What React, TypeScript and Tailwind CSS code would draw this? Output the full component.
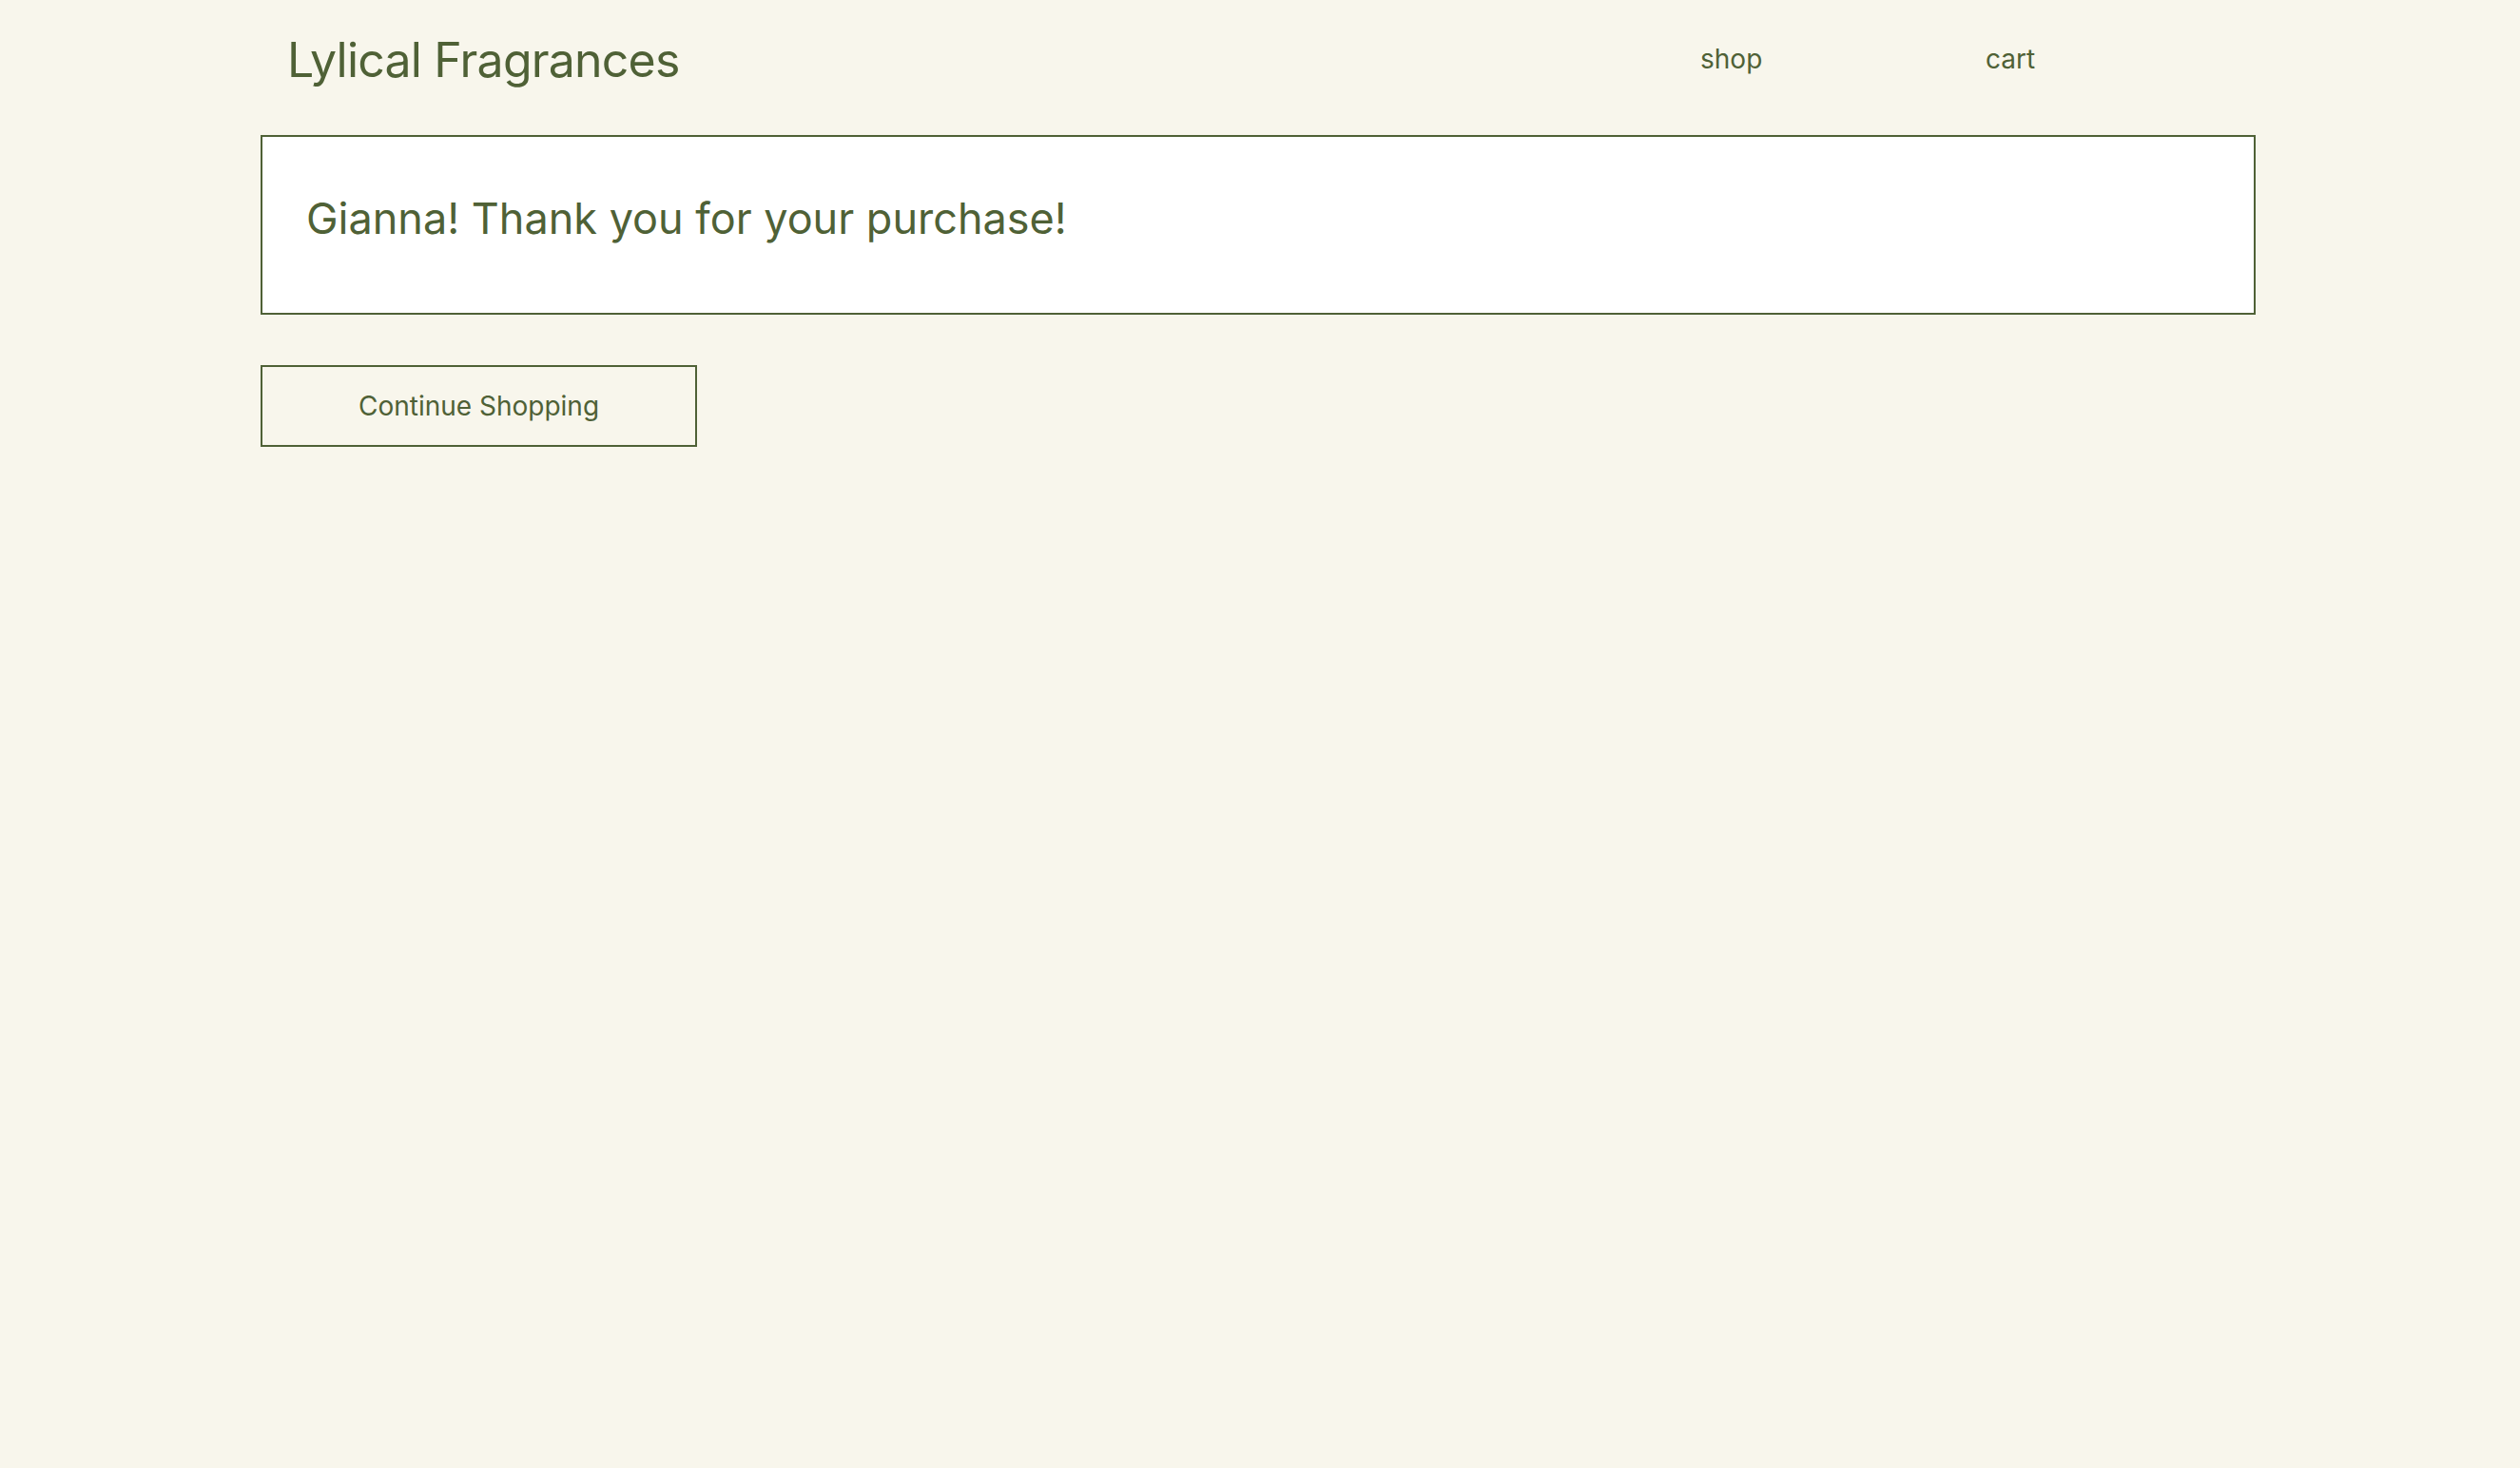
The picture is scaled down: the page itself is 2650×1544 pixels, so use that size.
export default function App() {
  return (
    <div className="min-h-screen w-full bg-[#f8f6ec] text-[#4f6136] font-['Inter','Liberation_Sans',sans-serif]">
      <div className="ml-[274px] w-[2098px]">
        <header className="flex h-[142px] items-start">
          <div className="w-[1514px] pl-[28px] pt-[38px]">
            <h1 className="text-[50px] leading-none font-normal tracking-[-0.8px]">Lylical Fragrances</h1>
          </div>
          <nav className="flex pt-[48px] text-[28px] leading-none">
            <a className="w-[300px]">shop</a>
            <a>cart</a>
          </nav>
        </header>

        <section className="h-[189px] border-2 border-[#4f6136] bg-white pl-[46px] pt-[63px]">
          <h2 className="text-[45px] leading-none font-normal">Gianna! Thank you for your purchase!</h2>
        </section>

        <button className="mt-[53px] flex h-[86px] w-[459px] items-center justify-center border-2 border-[#4f6136] text-[28px] leading-none">
          Continue Shopping
        </button>
      </div>
    </div>
  );
}
